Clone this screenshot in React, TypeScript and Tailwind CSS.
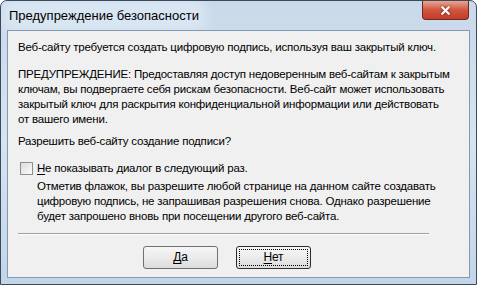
import { X } from 'lucide-react';

const font = { fontFamily: '"Liberation Sans", Arial, sans-serif' };

const Btn = ({ label, focused }: { label: string; focused?: boolean }) => (
  <button
    className={`w-[75px] h-[23px] rounded-[3px] border text-[12px] text-black flex items-center justify-center bg-gradient-to-b from-[#f6f6f6] via-[#ebebeb] to-[#dcdcdc] ${focused ? 'border-[#2c2c2c]' : 'border-[#707070]'}`}
  >
    {focused ? (
      <span className="w-[69px] h-[17px] border border-dotted border-black flex items-center justify-center">
        <span className="underline underline-offset-2">{label[0]}</span>
        {label.slice(1)}
      </span>
    ) : (
      <span>
        <span className="underline underline-offset-2">{label[0]}</span>
        {label.slice(1)}
      </span>
    )}
  </button>
);

export default function App() {
  return (
    <div className="w-[477px] h-[285px] bg-white" style={font}>
      <div className="w-full h-full rounded-t-[7px] border border-[#3a4a5c] bg-gradient-to-b from-[#c9d9ea] via-[#d6e3f1] to-[#c2d5e9] flex flex-col relative overflow-hidden">
        <div className="h-[29px] flex items-center pl-[8px] text-[13px] text-black">
          <span className="bg-[#d8e5f2] shadow-[0_0_10px_8px_#d8e5f2] rounded-md">Предупреждение безопасности</span>
        </div>
        <div className="absolute top-0 right-[7px] w-[47px] h-[19px] rounded-b-[4px] border border-t-0 border-[#6a2a22] bg-gradient-to-b from-[#e8a493] via-[#d0553f] to-[#c43c28] flex items-center justify-center">
          <X size={13} strokeWidth={4} className="text-white drop-shadow-[0_0_1px_#5a1a10]" />
        </div>
        <div className="flex-1 mx-[6px] mb-[6px] border border-[#8498b0] bg-[#f0f0f0] flex flex-col text-[11.5px] tracking-[-0.2px] leading-[15px] text-black pl-[10px] pr-[10px] pt-[9px] whitespace-nowrap">
          <p>Веб-сайту требуется создать цифровую подпись, используя ваш закрытый ключ.</p>
          <p className="mt-[12px]">
            ПРЕДУПРЕЖДЕНИЕ: Предоставляя доступ недоверенным веб-сайтам к закрытым
            <br />
            ключам, вы подвергаете себя рискам безопасности. Веб-сайт может использовать
            <br />
            закрытый ключ для раскрытия конфиденциальной информации или действовать
            <br />
            от вашего имени.
          </p>
          <p className="mt-[7px]">Разрешить веб-сайту создание подписи?</p>
          <label className="mt-[12px] flex items-center gap-[4px] ml-[2px]">
            <span className="w-[13px] h-[13px] border border-[#8e8f8f] bg-gradient-to-br from-[#dcdcdc] to-[#fbfbfb]" />
            <span>
              <span className="underline underline-offset-2">Н</span>е показывать диалог в следующий раз.
            </span>
          </label>
          <p className="mt-[3px] ml-[19px]">
            Отметив флажок, вы разрешите любой странице на данном сайте создавать
            <br />
            цифровую подпись, не запрашивая разрешения снова. Однако разрешение
            <br />
            будет запрошено вновь при посещении другого веб-сайта.
          </p>
          <div className="mt-[9px] mr-[30px] h-[2px] border-t border-[#a0a0a0] border-b-white border-b" />
          <div className="mt-[11px] flex gap-[18px] pl-[125px]">
            <Btn label="Да" />
            <Btn label="Нет" focused />
          </div>
        </div>
      </div>
    </div>
  );
}
